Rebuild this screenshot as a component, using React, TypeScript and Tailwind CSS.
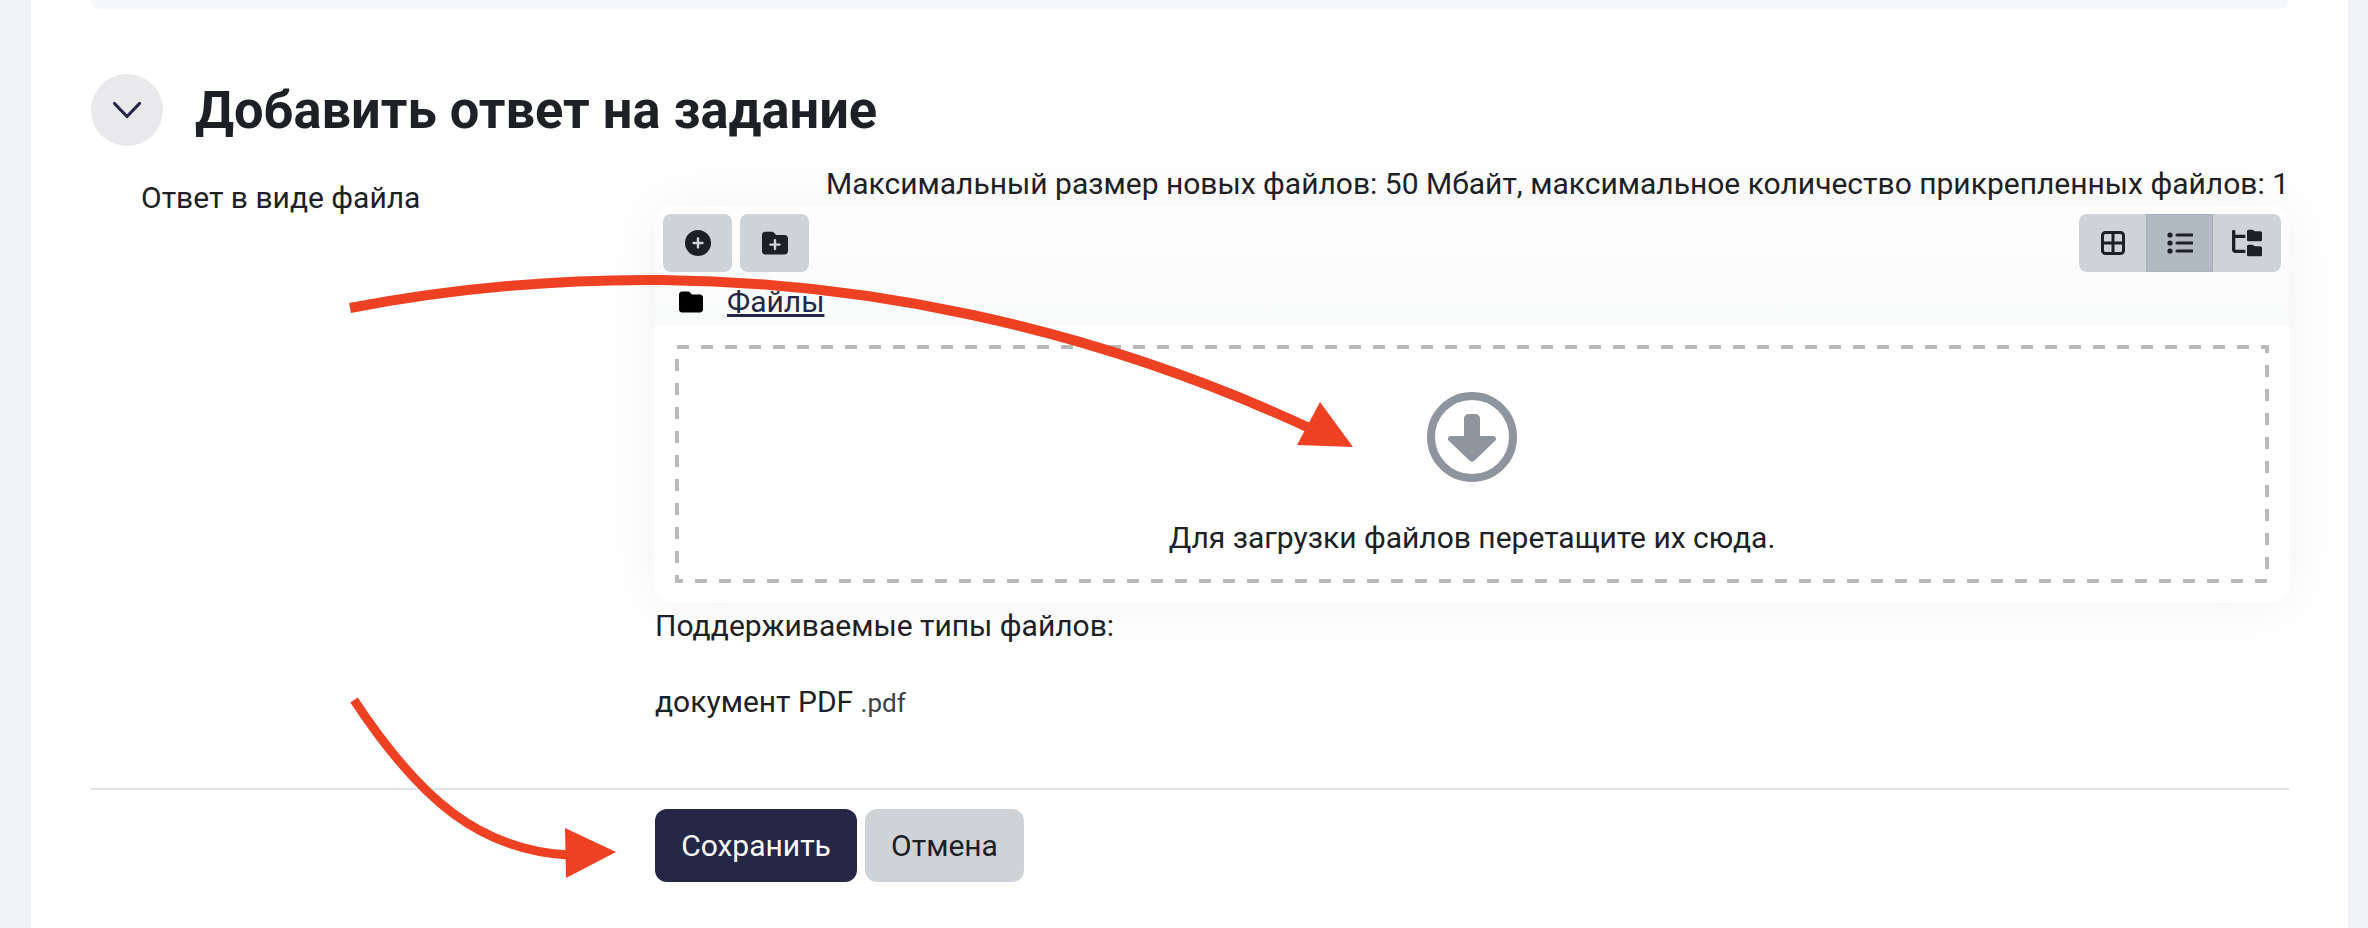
import React from "react";
import { FaCirclePlus, FaFolderPlus, FaFolder, FaFolderTree } from "react-icons/fa6";

function Grid() {
  return (
    <svg width="24" height="24" viewBox="0 0 24 24" fill="none" stroke="#1d2125" strokeWidth="3">
      <rect x="1.5" y="1.5" width="21" height="21" rx="3" />
      <path d="M12 2v20M2 12h20" />
    </svg>
  );
}

function ListIcon() {
  return (
    <svg width="26" height="22" viewBox="0 0 26 22" fill="#1d2125" stroke="none">
      <circle cx="3" cy="3" r="2.6" />
      <circle cx="3" cy="11" r="2.6" />
      <circle cx="3" cy="19" r="2.6" />
      <path d="M10 3h15M10 11h15M10 19h15" fill="none" stroke="#1d2125" strokeWidth="3" strokeLinecap="round" />
    </svg>
  );
}

function Drop() {
  return (
    <svg width="90" height="90" viewBox="0 0 90 90">
      <circle cx="45" cy="45" r="41" fill="none" stroke="#8f959e" strokeWidth="8" />
      <path d="M37 26a5 5 0 0 1 5-4h6a5 5 0 0 1 5 4v18h13c3 0 4 3 2 5L47 69c-1 1-3 1-4 0L22 49c-2-2-1-5 2-5h13z" fill="#8f959e" />
    </svg>
  );
}

function Arrows() {
  return (
    <svg className="absolute left-0 top-0 pointer-events-none" width="2368" height="928" viewBox="0 0 2368 928">
      <path d="M350 308C455 288 560 279 662 280C850 282 1080 320 1318 432" fill="none" stroke="#ee4123" strokeWidth="10" />
      <polygon points="1320,402 1353,447 1297,445" fill="#ee4123" />
      <path d="M354 700C420 800 480 850 568 855" fill="none" stroke="#ee4123" strokeWidth="9" />
      <polygon points="565,828 616,852 566,878" fill="#ee4123" />
    </svg>
  );
}

export default function App() {
  return (
    <div className="relative h-[928px] w-[2368px] overflow-hidden bg-[#f2f3f7] text-[#1d2125] [font-family:Roboto,sans-serif]">
      <div className="ml-[31px] h-full w-[2317px] bg-white pl-[60px] pr-[59px]">
        <div className="h-[9px] rounded-b-2xl bg-[#f6f7f9]" />
        <div className="mt-[65px] flex h-[72px] items-center gap-[32px]">
          <div className="flex h-[72px] w-[72px] items-center justify-center rounded-full bg-[#e9e9ec]">
            <svg width="30" height="18" viewBox="0 0 30 18" fill="none" stroke="#252746" strokeWidth="3.2" strokeLinecap="round" strokeLinejoin="round">
              <path d="M2.5 2.5L15 15.5 27.5 2.5" />
            </svg>
          </div>
          <h2 className="text-[52.4px] font-bold leading-none">Добавить ответ на задание</h2>
        </div>
        <div className="relative flex">
          <div className="mt-[34px] w-[564px] whitespace-nowrap pl-[50px] text-[30px] leading-[36px]">Ответ в виде файла</div>
          <div className="w-[1634px]">
            <div className="mt-[16px] h-[44px] whitespace-nowrap text-right text-[30px] leading-[44px]">Максимальный размер новых файлов: 50 Мбайт, максимальное количество прикрепленных файлов: 1</div>
            <div className="rounded-2xl bg-white shadow-[0_0_60px_rgba(0,0,0,0.06)]">
              <div className="h-[119px] rounded-t-2xl bg-gradient-to-b from-[#fefefe] to-[#f9fafa] px-[8px] pt-[8px]">
                <div className="flex justify-between">
                  <div className="flex gap-[8px]">
                    <div className="flex h-[58px] w-[69px] items-center justify-center rounded-lg bg-[#ced3d8]"><FaCirclePlus size={26} /></div>
                    <div className="flex h-[58px] w-[69px] items-center justify-center rounded-lg bg-[#ced3d8]"><FaFolderPlus size={26} /></div>
                  </div>
                  <div className="flex h-[58px] w-[202px] overflow-hidden rounded-lg bg-[#ced3d8]">
                    <div className="flex w-[67px] items-center justify-center"><Grid /></div>
                    <div className="flex w-[67px] items-center justify-center border border-[#a9b2bb] bg-[#b1b9c2]"><ListIcon /></div>
                    <div className="flex w-[68px] items-center justify-center"><FaFolderTree size={30} /></div>
                  </div>
                </div>
                <div className="mt-[12px] flex items-center pl-[16px]">
                  <FaFolder size={24} color="#000" />
                  <a className="ml-[24px] text-[30px] leading-[36px] text-[#252746] underline">Файлы</a>
                </div>
              </div>
              <div className="px-[20px] pb-[20px] pt-[20px]">
                <div className="relative flex h-[238px] flex-col items-center pt-[47px]">
                  <svg className="absolute left-0 top-0" width="1594" height="238" fill="none" stroke="#b9b9b9" strokeWidth="4" strokeDasharray="12 12">
                    <rect x="2" y="2" width="1590" height="234" />
                  </svg>
                  <Drop />
                  <div className="mt-[38px] whitespace-nowrap text-[30px] leading-[36px]">Для загрузки файлов перетащите их сюда.</div>
                </div>
              </div>
            </div>
            <div className="mt-[5px] text-[30px] leading-[36px]">Поддерживаемые типы файлов:</div>
            <div className="mt-[40px] text-[30px] leading-[36px]">документ PDF <span className="text-[26px] text-[#3a4047]">.pdf</span></div>
          </div>
        </div>
        <div className="mt-[67px] h-[2px] bg-[#dee2e6]" />
        <div className="mt-[19px] flex gap-[8px] pl-[564px]">
          <button className="flex h-[73px] w-[202px] items-center justify-center rounded-xl bg-[#252746] text-[30px] text-white">Сохранить</button>
          <button className="flex h-[73px] w-[159px] items-center justify-center rounded-xl bg-[#ced3d8] text-[30px]">Отмена</button>
        </div>
      </div>
      <Arrows />
    </div>
  );
}
